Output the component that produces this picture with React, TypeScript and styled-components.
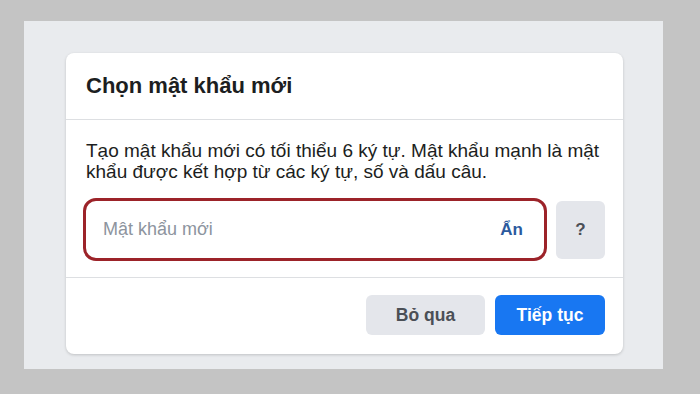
import styled, { createGlobalStyle } from "styled-components";

const GlobalStyle = createGlobalStyle`
  html, body {
    margin: 0;
    padding: 0;
    background: #c4c4c4;
    font-family: "Liberation Sans", Arial, Helvetica, sans-serif;
  }
  * {
    box-sizing: border-box;
  }
`;

const Page = styled.div`
  width: 700px;
  height: 394px;
  padding: 21px 37px 25px 24px;
`;

const Backdrop = styled.div`
  height: 100%;
  background: #e9ebee;
  padding: 32px 40px 15px 42px;
`;

const Card = styled.div`
  height: 100%;
  background: #ffffff;
  border-radius: 8px;
  box-shadow: 0 1px 3px rgba(0, 0, 0, 0.18);
  display: flex;
  flex-direction: column;
`;

const Header = styled.div`
  height: 67px;
  padding: 0 20px;
  display: flex;
  align-items: center;
  border-bottom: 1px solid #dddfe2;
`;

const Title = styled.h2`
  margin: 0;
  font-size: 22px;
  font-weight: 700;
  color: #1c1e21;
`;

const Body = styled.div`
  padding: 20px 18px 16px 17px;
  border-bottom: 1px solid #dddfe2;
`;

const Description = styled.p`
  margin: 0 0 16px 3px;
  font-size: 19px;
  line-height: 21px;
  color: #1c1e21;
`;

const InputRow = styled.div`
  display: flex;
  align-items: center;
  gap: 9px;
`;

const InputBox = styled.div`
  flex: 1;
  height: 63px;
  border: 3px solid #9c2329;
  border-radius: 13px;
  display: flex;
  align-items: center;
  padding: 0 21px 0 17px;
`;

const Placeholder = styled.span`
  flex: 1;
  font-size: 18px;
  color: #8d949e;
`;

const ToggleLink = styled.span`
  font-size: 17px;
  font-weight: 700;
  color: #2b5a9e;
`;

const HelpButton = styled.div`
  width: 49px;
  height: 58px;
  border-radius: 6px;
  background: #e4e6eb;
  display: flex;
  align-items: center;
  justify-content: center;
  font-size: 17px;
  font-weight: 700;
  color: #4b4f56;
`;

const Footer = styled.div`
  flex: 1;
  display: flex;
  justify-content: flex-end;
  align-items: flex-start;
  gap: 10px;
  padding: 17px 18px 0 0;
`;

const Button = styled.button<{ $primary?: boolean }>`
  height: 40px;
  width: ${(p) => (p.$primary ? "110px" : "119px")};
  border: none;
  border-radius: 6px;
  font-family: inherit;
  font-size: 17.5px;
  font-weight: 700;
  background: ${(p) => (p.$primary ? "#1877f2" : "#e4e6eb")};
  color: ${(p) => (p.$primary ? "#ffffff" : "#4b4f56")};
`;

export default function App() {
  return (
    <>
      <GlobalStyle />
      <Page>
        <Backdrop>
          <Card>
            <Header>
              <Title>Chọn mật khẩu mới</Title>
            </Header>
            <Body>
              <Description>
                Tạo mật khẩu mới có tối thiểu 6 ký tự. Mật khẩu mạnh là mật
                khẩu được kết hợp từ các ký tự, số và dấu câu.
              </Description>
              <InputRow>
                <InputBox>
                  <Placeholder>Mật khẩu mới</Placeholder>
                  <ToggleLink>Ẩn</ToggleLink>
                </InputBox>
                <HelpButton>?</HelpButton>
              </InputRow>
            </Body>
            <Footer>
              <Button>Bỏ qua</Button>
              <Button $primary>Tiếp tục</Button>
            </Footer>
          </Card>
        </Backdrop>
      </Page>
    </>
  );
}
